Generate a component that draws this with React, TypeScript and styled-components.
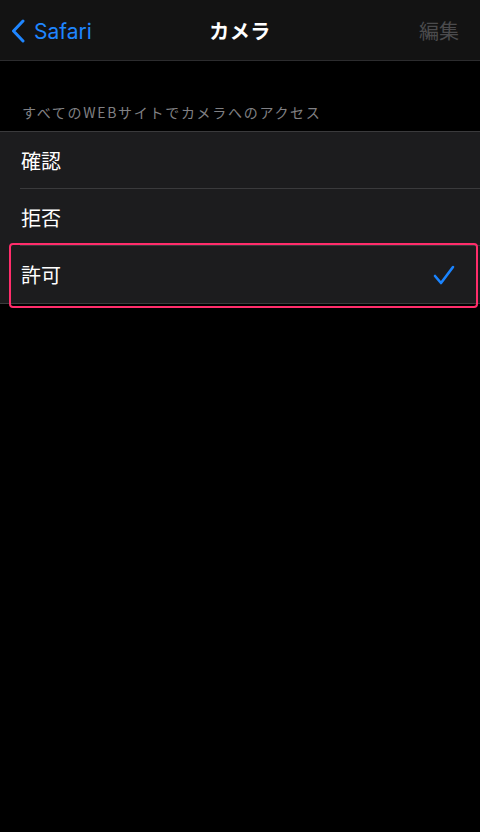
import React from "react";
import styled, { createGlobalStyle } from "styled-components";

const Global = createGlobalStyle`
  html, body { margin: 0; padding: 0; background: #000; }
  body { font-family: Inter, "Noto Sans CJK JP", sans-serif; -webkit-font-smoothing: antialiased; }
  #root { min-height: 832px; background: #000; }
`;

const Page = styled.div`
  width: 480px;
  min-height: 832px;
  background: #000;
  display: flex;
  flex-direction: column;
`;

const NavBar = styled.header`
  box-sizing: border-box;
  height: 61px;
  background: #131313;
  border-bottom: 1px solid #2c2c2e;
  display: grid;
  grid-template-columns: 1fr auto 1fr;
  align-items: center;
  padding: 0 21px;
`;

const Back = styled.div`
  display: flex;
  align-items: center;
  gap: 8px;
  margin-left: -11px;
  color: #1f86ff;
  font-size: 21px;
  font-family: Inter, "Noto Sans CJK JP", sans-serif;
  justify-self: start;
  padding-top: 2px;
`;

const Title = styled.div`
  color: #fff;
  font-size: 20px;
  font-weight: 700;
  font-family: "Noto Sans CJK JP", sans-serif;
  letter-spacing: 0.5px;
  padding-top: 1px;
`;

const Edit = styled.div`
  justify-self: end;
  color: #4b4b4d;
  font-size: 20px;
  font-family: "Noto Sans CJK JP", sans-serif;
  padding-top: 1px;
`;

const SectionHeader = styled.div`
  box-sizing: border-box;
  height: 70px;
  display: flex;
  align-items: flex-end;
  padding: 0 22px 9px;
  color: #808084;
  font-size: 14px;
  font-weight: 400;
  font-family: "Noto Sans CJK JP", sans-serif;
  letter-spacing: 1.7px;
`;

const Group = styled.div`
  background: #1c1c1e;
  border-top: 1px solid #3a3a3c;
  border-bottom: 1px solid #3a3a3c;
`;

const Row = styled.div<{ $last?: boolean }>`
  position: relative;
  height: 57px;
  display: flex;
  align-items: center;
  justify-content: space-between;
  padding: 0 25px 0 21px;
  &::after {
    content: "";
    display: ${(p) => (p.$last ? "none" : "block")};
    position: absolute;
    left: 20px;
    right: 0;
    bottom: 0;
    height: 1px;
    background: #3a3a3c;
  }
`;

const RowLabel = styled.span`
  color: #fff;
  font-size: 20px;
  font-family: "Noto Sans CJK JP", sans-serif;
`;

const Highlight = styled.div`
  position: absolute;
  left: 9px;
  right: 2px;
  top: -3px;
  bottom: -5px;
  border: 2px solid #ff2d6b;
  border-radius: 4px;
  pointer-events: none;
`;

const options = ["確認", "拒否", "許可"];
const selected = 2;

export default function App() {
  return (
    <Page>
      <Global />
      <NavBar>
        <Back>
          <svg width="16" height="24" viewBox="0 0 16 24">
            <polyline
              points="13,2 3.5,12 13,22"
              fill="none"
              stroke="#1f86ff"
              strokeWidth="3"
              strokeLinecap="round"
              strokeLinejoin="round"
            />
          </svg>
          <span>Safari</span>
        </Back>
        <Title>カメラ</Title>
        <Edit>編集</Edit>
      </NavBar>
      <SectionHeader>すべてのWEBサイトでカメラへのアクセス</SectionHeader>
      <Group>
        {options.map((o, i) => (
          <Row key={o} $last={i === options.length - 1}>
            <RowLabel>{o}</RowLabel>
            {i === selected && (
              <svg width="22" height="20" viewBox="0 0 22 20">
                <polyline
                  points="2,11 8,18 20,2"
                  fill="none"
                  stroke="#1a84ff"
                  strokeWidth="2.6"
                  strokeLinecap="round"
                  strokeLinejoin="round"
                />
              </svg>
            )}
            {i === selected && <Highlight />}
          </Row>
        ))}
      </Group>
    </Page>
  );
}
